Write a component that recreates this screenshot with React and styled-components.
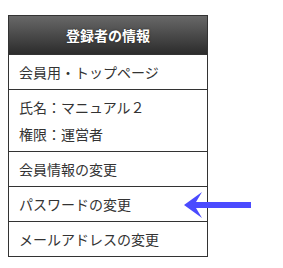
import React from 'react'
import styled, { createGlobalStyle } from 'styled-components'

const GlobalStyle = createGlobalStyle`
  html, body {
    margin: 0;
    padding: 0;
    background: #fff;
  }
  body {
    font-family: "Noto Sans CJK JP", "Noto Sans", sans-serif;
    color: #333;
  }
`

const Page = styled.div`
  position: relative;
  padding: 15px 0 0 8px;
  width: 283px;
  height: 268px;
  box-sizing: border-box;
`

const Panel = styled.div`
  width: 200px;
  box-sizing: border-box;
  border: 1px solid #333;
  display: flex;
  flex-direction: column;
`

const Header = styled.div`
  height: 38px;
  display: flex;
  align-items: center;
  justify-content: center;
  background: linear-gradient(to bottom, #686868, #2c2c2c);
  color: #fff;
  font-weight: bold;
  font-size: 14px;
  text-shadow: 0 0 2px rgba(0, 0, 0, 0.6);
`

const Row = styled.div`
  border-top: 1px solid #333;
  padding: 7px 10px;
  display: flex;
  flex-direction: column;
  gap: ${p => p.$gap || 0}px;
  font-size: 14px;
  line-height: 20px;
`

const Arrow = styled.svg`
  position: absolute;
  left: 183px;
  top: 191px;
`

export default function App () {
  return (<>
    <GlobalStyle/>
    <Page>
      <Panel>
        <Header>登録者の情報</Header>
        <Row>会員用・トップページ</Row>
        <Row $gap={7}>
          <span>氏名：マニュアル２</span>
          <span>権限：運営者</span>
        </Row>
        <Row>会員情報の変更</Row>
        <Row>パスワードの変更</Row>
        <Row>メールアドレスの変更</Row>
      </Panel>
      <Arrow width="70" height="28" viewBox="0 0 70 28">
        <path d="M1 14 L19 1 L13 11 L68 11 L68 17 L13 17 L19 27 Z" fill="#4b4bff"/>
      </Arrow>
    </Page>
  </>)
}
